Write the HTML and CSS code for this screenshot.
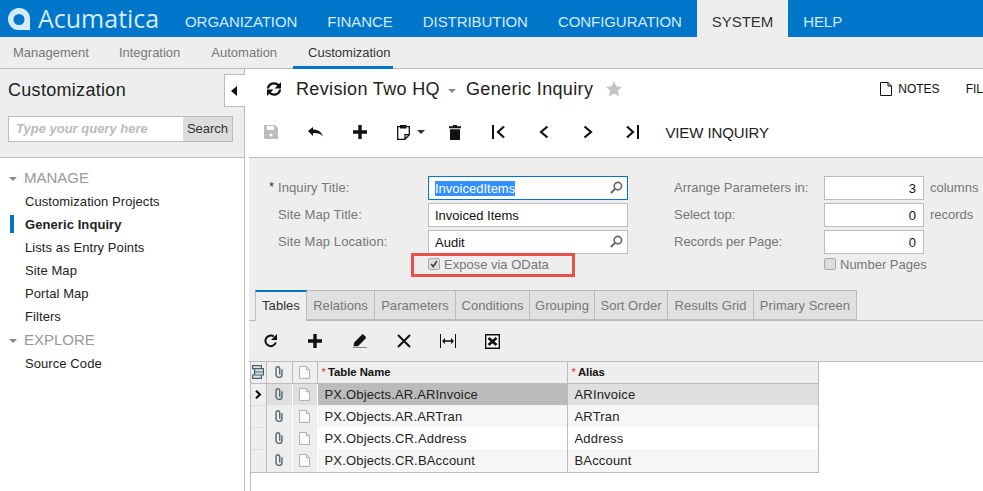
FILE: index.html
```html
<!DOCTYPE html>
<html lang="en">
<head>
  <meta charset="UTF-8" />
  <title>Generic Inquiry</title>
  <link rel="stylesheet" href="styles.css">
</head>
<body>
  <svg class="defs" width="0" height="0">
    <symbol id="i-reload" viewBox="0 0 16 14">
      <path d="M2 6.500A6 5.600 0 0 1 12.600 3.400M14 7.500A6 5.600 0 0 1 3.400 10.600" fill="none" stroke="currentColor" stroke-width="2.200"/>
      <path d="M15 0v6.500H8.500zM1 14V7.500h6.500z" fill="currentColor"/>
    </symbol>
    <symbol id="i-plus" viewBox="0 0 14 14">
      <path d="M5.300 0h3.400v5.300H14v3.400H8.700V14H5.300V8.700H0V5.300h5.300z" fill="currentColor"/>
    </symbol>
    <symbol id="i-clip" viewBox="0 0 10 15">
      <path d="M8.700 4v6.500a3.700 3.700 0 0 1-7.400 0V3.300a2.300 2.300 0 0 1 4.600 0V11" fill="none" stroke="currentColor" stroke-width="1.800"/>
    </symbol>
    <symbol id="i-note" viewBox="0 0 12 14">
      <path d="M.5.500h7.500l3.500 3.500v9.500H.5z" fill="#fbfbfb" stroke="currentColor"/>
      <path d="M8 .5V4h3.500" fill="none" stroke="currentColor"/>
    </symbol>
    <symbol id="i-search" viewBox="0 0 14 14">
      <circle cx="8.500" cy="5.500" r="4" fill="none" stroke="currentColor" stroke-width="1.800"/>
      <path d="M5.500 8.500L1 13" stroke="currentColor" stroke-width="2.200"/>
    </symbol>
  </svg>

  <header class="topbar">
    <div class="logo">
      <svg class="logo-mark" viewBox="0 0 22 22">
        <path d="M11 0c6 0 11 4.500 11 10.500V22H10C4.500 22 0 17 0 11S5 0 11 0z" fill="#d5eafa"/>
        <circle cx="11" cy="11.500" r="5.500" fill="#0076cb"/>
      </svg>
      <span>Acumatica</span>
    </div>
    <nav class="mainnav">
      <a>ORGANIZATION</a>
      <a>FINANCE</a>
      <a>DISTRIBUTION</a>
      <a>CONFIGURATION</a>
      <a class="active">SYSTEM</a>
      <a>HELP</a>
    </nav>
  </header>

  <nav class="subnav">
    <a class="first">Management</a>
    <a>Integration</a>
    <a class="third">Automation</a>
    <a class="active">Customization</a>
  </nav>

  <div class="page">
    <aside class="sidebar">
      <div class="side-top">
        <h2>Customization</h2>
        <div class="searchbox">
          <span class="placeholder">Type your query here</span>
          <span class="search-btn">Search</span>
        </div>
      </div>
      <ul class="tree">
        <li class="group"><i class="caret"></i>MANAGE</li>
        <li>Customization Projects</li>
        <li class="current">Generic Inquiry</li>
        <li>Lists as Entry Points</li>
        <li>Site Map</li>
        <li>Portal Map</li>
        <li>Filters</li>
        <li class="group"><i class="caret"></i>EXPLORE</li>
        <li>Source Code</li>
      </ul>
      <div class="collapse"><i></i></div>
    </aside>

    <main class="content">
      <div class="titlebar">
        <svg class="ico reload-main"><use href="#i-reload"/></svg>
        <span class="crumb">Revision Two HQ</span>
        <i class="caret crumb-caret"></i>
        <span class="crumb">Generic Inquiry</span>
        <svg class="star" viewBox="0 0 16 16"><path d="M8 0l2.400 5.300 5.600.6-4.200 3.800 1.200 5.800L8 12.600l-5 2.900 1.200-5.800L0 5.900l5.600-.6z" fill="#c4c4c4"/></svg>
        <div class="title-links">
          <svg class="ico note-ico"><use href="#i-note"/></svg>
          <span class="notes">NOTES</span>
          <span class="files">FILES</span>
        </div>
      </div>

      <div class="toolbar">
        <span class="tool">
          <svg class="ico-14" viewBox="0 0 14 14"><path d="M0 0h11l3 3v11H0z" fill="#bdbdbd"/><path d="M3 1h7v4H3z" fill="#fff"/><circle cx="7" cy="10" r="1.600" fill="#fff"/></svg>
        </span>
        <span class="tool">
          <svg class="ico-undo" viewBox="0 0 15 10"><path d="M0 4l5-4v2.600c5 0 8.500 1.900 10 7.400-2.200-3.200-5-4-10-3.900V9z" fill="currentColor"/></svg>
        </span>
        <span class="tool"><svg class="ico-14"><use href="#i-plus"/></svg></span>
        <span class="tool tool-wide">
          <svg class="ico-paste" viewBox="0 0 13 16"><path d="M3.300 2.700H.7v12.600H8l4.300-4.600V2.700H9.500M8 15.300v-4.600h4.300" fill="none" stroke="currentColor" stroke-width="1.300"/><path d="M3 1h6.500v3.500H3z" fill="currentColor"/></svg>
          <i class="caret dark"></i>
        </span>
        <span class="tool">
          <svg class="ico-trash" viewBox="0 0 12 15"><path d="M4 0h4v1.200h4v2H0v-2h4zM1 4.200h10V15H1z" fill="currentColor"/></svg>
        </span>
        <span class="tool"><svg class="ico-14" viewBox="0 0 14 14"><path d="M1 0v14" stroke="currentColor" stroke-width="2"/><path d="M12 1.500L6 7l6 5.500" fill="none" stroke="currentColor" stroke-width="2.200"/></svg></span>
        <span class="tool"><svg class="ico-14" viewBox="0 0 14 14"><path d="M10.500 1.500L4 7l6.500 5.500" fill="none" stroke="currentColor" stroke-width="2.200"/></svg></span>
        <span class="tool"><svg class="ico-14" viewBox="0 0 14 14"><path d="M3.500 1.500L10 7l-6.500 5.500" fill="none" stroke="currentColor" stroke-width="2.200"/></svg></span>
        <span class="tool"><svg class="ico-14" viewBox="0 0 14 14"><path d="M13 0v14" stroke="currentColor" stroke-width="2"/><path d="M2 1.500L8 7l-6 5.500" fill="none" stroke="currentColor" stroke-width="2.200"/></svg></span>
        <span class="view-inquiry">VIEW INQUIRY</span>
      </div>

      <section class="formpanel">
        <div class="form-col left-col">
          <div class="row">
            <label class="req">Inquiry Title:</label>
            <div class="field focus"><span class="selected">InvoicedItems</span><svg class="lookup"><use href="#i-search"/></svg></div>
          </div>
          <div class="row">
            <label>Site Map Title:</label>
            <div class="field"><span>Invoiced Items</span></div>
          </div>
          <div class="row">
            <label>Site Map Location:</label>
            <div class="field"><span>Audit</span><svg class="lookup"><use href="#i-search"/></svg></div>
          </div>
          <div class="check-row">
            <span class="check on"><svg viewBox="0 0 12 12"><path d="M2.500 6l2.500 3 4.500-6.500" fill="none" stroke="#444" stroke-width="2"/></svg></span>
            <span>Expose via OData</span>
            <div class="callout"></div>
          </div>
        </div>
        <div class="form-col right-col">
          <div class="row">
            <label>Arrange Parameters in:</label>
            <div class="field num">3</div>
            <span class="suffix">columns</span>
          </div>
          <div class="row">
            <label>Select top:</label>
            <div class="field num">0</div>
            <span class="suffix">records</span>
          </div>
          <div class="row">
            <label>Records per Page:</label>
            <div class="field num">0</div>
          </div>
          <div class="check-row">
            <span class="check"></span>
            <span>Number Pages</span>
          </div>
        </div>
      </section>

      <div class="tabs">
        <a class="active">Tables</a>
        <a class="t-relations">Relations</a>
        <a class="t-parameters">Parameters</a>
        <a class="t-conditions">Conditions</a>
        <a class="t-grouping">Grouping</a>
        <a class="t-sort">Sort Order</a>
        <a class="t-results">Results Grid</a>
        <a class="t-primary">Primary Screen</a>
      </div>

      <div class="gridbar">
        <span class="tool"><svg class="ico-14" viewBox="0 0 14 14"><path d="M11.800 8.500A5.300 5.300 0 1 1 9.800 2.500" fill="none" stroke="currentColor" stroke-width="2"/><path d="M13 0v6H7z" fill="currentColor"/></svg></span>
        <span class="tool"><svg class="ico-14"><use href="#i-plus"/></svg></span>
        <span class="tool"><svg class="ico-14" viewBox="0 0 14 14"><path d="M.5 12.300l.7-3.800L8.800.8c.6-.6 1.200-.6 1.800 0l2 2c.6.600.600 1.200 0 1.800L5 12.300z" fill="currentColor"/><path d="M0 13.500h14" stroke="#888"/></svg></span>
        <span class="tool"><svg class="ico-14" viewBox="0 0 14 14"><path d="M1 1l12 12M13 1L1 13" stroke="currentColor" stroke-width="2"/></svg></span>
        <span class="tool"><svg class="ico-fit" viewBox="0 0 16 14"><path d="M.5 0v14M15.500 0v14" stroke="currentColor"/><path d="M3 7h10" stroke="currentColor" stroke-width="1.500"/><path d="M2 7l3-3v6zM14 7l-3-3v6z" fill="currentColor"/></svg></span>
        <span class="tool"><svg class="ico-xl" viewBox="0 0 15 15"><path d="M.7.7h13.600v13.600H.7z" fill="#fff" stroke="currentColor" stroke-width="1.400"/><path d="M3.500 4l8 7M11.500 4l-8 7" stroke="currentColor" stroke-width="2.800"/></svg></span>
      </div>

      <div class="gridwrap">
        <table class="grid">
          <colgroup>
            <col class="c-sel"><col class="c-ico"><col class="c-ico2"><col class="c-name"><col class="c-alias">
          </colgroup>
          <thead>
            <tr>
              <th class="cell-ico">
                <svg class="ico-head" viewBox="0 0 12 14"><path d="M.6.600h8.800v3H.6zM2.600 3.600h8.800v3.400H2.600zM2.600 7h8.800v3H2.600zM.6 10h8.800v3.400H.6z" fill="#dfe5e8" stroke="#46606f" stroke-width="1.200"/></svg>
              </th>
              <th class="cell-ico"><svg class="ico-cl"><use href="#i-clip"/></svg></th>
              <th class="cell-ico"><svg class="ico-nt"><use href="#i-note"/></svg></th>
              <th><em>*</em>Table Name</th>
              <th><em>*</em>Alias</th>
            </tr>
          </thead>
          <tbody>
            <tr class="sel">
              <td class="cell-ico marker"><svg class="arrow" viewBox="0 0 7 9"><path d="M1 .8L5 4.500 1 8.200" fill="none" stroke="#000" stroke-width="2"/></svg></td>
              <td class="cell-ico"><svg class="ico-cl"><use href="#i-clip"/></svg></td>
              <td class="cell-ico"><svg class="ico-nt"><use href="#i-note"/></svg></td>
              <td class="focus-cell">PX.Objects.AR.ARInvoice</td>
              <td>ARInvoice</td>
            </tr>
            <tr class="alt">
              <td class="cell-ico marker"></td>
              <td class="cell-ico"><svg class="ico-cl"><use href="#i-clip"/></svg></td>
              <td class="cell-ico"><svg class="ico-nt"><use href="#i-note"/></svg></td>
              <td>PX.Objects.AR.ARTran</td>
              <td>ARTran</td>
            </tr>
            <tr>
              <td class="cell-ico marker"></td>
              <td class="cell-ico"><svg class="ico-cl"><use href="#i-clip"/></svg></td>
              <td class="cell-ico"><svg class="ico-nt"><use href="#i-note"/></svg></td>
              <td>PX.Objects.CR.Address</td>
              <td>Address</td>
            </tr>
            <tr class="alt">
              <td class="cell-ico marker"></td>
              <td class="cell-ico"><svg class="ico-cl"><use href="#i-clip"/></svg></td>
              <td class="cell-ico"><svg class="ico-nt"><use href="#i-note"/></svg></td>
              <td>PX.Objects.CR.BAccount</td>
              <td>BAccount</td>
            </tr>
          </tbody>
        </table>
      </div>
    </main>
  </div>
</body>
</html>
```

FILE: styles.css
```css
* {
  box-sizing: border-box;
}

html, body {
  height: 491px;
}

body {
  margin: 0;
  overflow: hidden;
  background: #fff;
  color: #222;
  font-family: "Liberation Sans", Arial, sans-serif;
  font-size: 13px;
}

.defs {
  position: absolute;
}

/* top bar */
.topbar {
  display: flex;
  height: 37px;
  background: #0076cb;
}

.logo {
  display: flex;
  align-items: center;
  width: 170px;
  padding-left: 8px;
  color: #d5eafa;
  font-family: "Open Sans", sans-serif;
  font-size: 25px;
  line-height: 37px;
}

.logo-mark {
  width: 22px;
  height: 22px;
  margin-right: 8px;
}

.mainnav {
  display: flex;
}

.mainnav a {
  padding: 0 15px;
  color: #d5eafa;
  font-size: 15px;
  letter-spacing: -0.06px;
  line-height: 44px;
}

.mainnav a.active {
  height: 37px;
  background: #eee;
  color: #333;
}

.subnav {
  display: flex;
  height: 32px;
  background: #eee;
  border-bottom: 1px solid #bbb;
}

.subnav a {
  padding: 0 15px 0 16px;
  color: #777;
  font-size: 13px;
  line-height: 32px;
}

.subnav a.first {
  padding: 0 14px 0 13px;
}

.subnav a.third {
  padding-right: 16px;
}

.subnav a.active {
  width: 100px;
  height: 32px;
  padding: 0 15px;
  color: #333;
  border-bottom: 3px solid #0076cb;
}

/* sidebar */
.page {
  display: flex;
  height: 422px;
}

.sidebar {
  position: relative;
  flex: 0 0 245px;
  border-right: 1px solid #bbb;
}

.side-top {
  height: 89px;
  padding: 10px 11px 0 8px;
  background: #eee;
  border-bottom: 1px solid #bbb;
}

.side-top h2 {
  margin: 0 0 15px;
  color: #222;
  font-size: 18px;
  font-weight: normal;
  letter-spacing: 0.3px;
  line-height: 22px;
}

.searchbox {
  display: flex;
  justify-content: space-between;
  height: 26px;
  background: #fff;
  border: 1px solid #bbb;
  line-height: 24px;
}

.placeholder {
  padding-left: 7px;
  color: #bbb;
  font-style: italic;
  font-weight: bold;
}

.search-btn {
  width: 49px;
  background: #ddd;
  color: #333;
  text-align: center;
}

.tree {
  margin: 0;
  padding: 8px 0 0;
  list-style: none;
  letter-spacing: 0.08px;
}

.tree li {
  height: 23px;
  padding-left: 25px;
  line-height: 23px;
}

.tree li.group {
  display: flex;
  align-items: center;
  height: 24px;
  padding-left: 9px;
  padding-bottom: 2px;
  color: #999;
  font-size: 15px;
  letter-spacing: 0;
}

.tree li.group .caret {
  margin: 4px 7px 0 0;
}

.tree li.current {
  position: relative;
  font-weight: bold;
}

.tree li.current::before {
  content: "";
  position: absolute;
  left: 10px;
  top: 2px;
  width: 4px;
  height: 18px;
  background: #0076cb;
}

.caret {
  display: inline-block;
  width: 0;
  height: 0;
  border-left: 4px solid transparent;
  border-right: 4px solid transparent;
  border-top: 4px solid #888;
}

.caret.dark {
  margin-left: 7px;
  border-top-color: #333;
}

.collapse {
  position: absolute;
  left: 224px;
  top: 5px;
  width: 21px;
  height: 33px;
  background: #fff;
  border: 1px solid #bbb;
  border-right: none;
}

.collapse i {
  position: absolute;
  left: 6px;
  top: 11px;
  border-top: 5px solid transparent;
  border-bottom: 5px solid transparent;
  border-right: 6px solid #111;
}

/* main */
.content {
  flex: 1;
  min-width: 0;
  padding-left: 4px;
}

.titlebar {
  display: flex;
  align-items: center;
  height: 43px;
  padding: 0 0 3px 17px;
  color: #111;
}

.reload-main {
  flex: none;
  width: 16px;
  height: 14px;
  margin-right: 14px;
}

.crumb {
  flex: none;
  color: #222;
  font-size: 18px;
  letter-spacing: 0.35px;
  white-space: nowrap;
}

.crumb-caret {
  flex: none;
  margin: 3px 10px 0 8px;
}

.star {
  flex: none;
  width: 16px;
  height: 16px;
  margin-left: 13px;
}

.title-links {
  display: flex;
  align-items: center;
  flex: none;
  margin-left: 258px;
  font-size: 12px;
  white-space: nowrap;
}

.note-ico {
  width: 12px;
  height: 14px;
  margin-right: 6px;
}

.notes {
  margin-right: 26px;
}

.toolbar {
  display: flex;
  align-items: center;
  height: 45px;
  padding-bottom: 5px;
  color: #111;
}

.tool {
  display: flex;
  align-items: center;
  justify-content: center;
  flex: 0 0 44.300px;
}

.tool-wide {
  flex-basis: 51px;
  justify-content: flex-start;
  padding-left: 15px;
}

.ico-14 {
  width: 14px;
  height: 14px;
}

.ico-undo {
  width: 15px;
  height: 10px;
}

.ico-paste {
  width: 13px;
  height: 16px;
}

.ico-trash {
  width: 12px;
  height: 15px;
}

.view-inquiry {
  margin-left: 11px;
  font-size: 15px;
  letter-spacing: -0.1px;
  color: #222;
}

/* form */
.formpanel {
  display: flex;
  height: 133px;
  padding-top: 18px;
  background: #eee;
  border-top: 1px solid #bbb;
  color: #777;
}

.form-col {
  flex: none;
}

.left-col {
  width: 425px;
}

.row {
  display: flex;
  align-items: center;
  height: 24px;
  margin-bottom: 3px;
}

.row label {
  flex: none;
  padding-bottom: 2px;
  letter-spacing: 0.1px;
}

.left-col .row label {
  width: 179px;
  padding-left: 29px;
}

.right-col .row label {
  width: 150px;
  letter-spacing: 0;
}

.req {
  position: relative;
}

.req::before {
  content: "*";
  position: absolute;
  left: 20px;
  top: -1px;
  color: #333;
}

.field {
  position: relative;
  flex: none;
  width: 200px;
  height: 24px;
  padding-left: 6px;
  background: #fff;
  border: 1px solid #bbb;
  color: #111;
  font-size: 13px;
  line-height: 24px;
}

.field.focus {
  border-color: #0076cb;
}

.selected {
  background: #3390ff;
  color: #fff;
}

.field.num {
  width: 100px;
  padding: 0 7px 0 0;
  text-align: right;
}

.lookup {
  position: absolute;
  right: 4px;
  top: 4px;
  width: 13px;
  height: 13px;
  color: #666;
}

.suffix {
  margin-left: 6px;
  padding-bottom: 2px;
}

.check-row {
  position: relative;
  display: flex;
  align-items: center;
  gap: 4px;
  height: 14px;
  margin-top: 1px;
}

.left-col .check-row {
  margin-left: 179px;
}

.right-col .check-row {
  margin-left: 150px;
}

.check {
  width: 12px;
  height: 12px;
  background: #ddd;
  border: 1px solid #aaa;
  border-radius: 2px;
}

.check svg {
  display: block;
  width: 10px;
  height: 10px;
}

/* the highlight drawn on top of the screenshot */
.callout {
  position: absolute;
  left: -17px;
  top: -4px;
  width: 164px;
  height: 24px;
  border: 3px solid #e8504a;
}

/* tabs */
.tabs {
  display: flex;
  height: 31px;
  padding-left: 6px;
  background: #eee;
  border-bottom: 1px solid #bbb;
}

.tabs a {
  height: 30px;
  background: #e0e0e0;
  border: 1px solid #bbb;
  border-left: none;
  color: #777;
  letter-spacing: 0.05px;
  line-height: 29px;
  text-align: center;
}

.tabs a.active {
  width: 52px;
  height: 31px;
  background: #eee;
  border-left: 1px solid #bbb;
  border-top: 2px solid #0076cb;
  border-bottom: none;
  color: #333;
  line-height: 28px;
}

.t-relations { width: 68px; }
.t-parameters { width: 81px; }
.t-conditions { width: 74px; }
.t-grouping { width: 65px; }
.t-sort { width: 73px; }
.t-results { width: 86px; }
.t-primary { width: 103px; }

.gridbar {
  display: flex;
  align-items: center;
  height: 41px;
  background: #eee;
  border-bottom: 1px solid #bbb;
  color: #111;
}

.ico-fit {
  width: 16px;
  height: 14px;
}

.ico-xl {
  width: 15px;
  height: 15px;
}

/* grid */
.gridwrap {
  height: 130px;
  margin-left: 1px;
  border-left: 1px solid #bbb;
}

.grid {
  width: 567px;
  border-collapse: collapse;
  table-layout: fixed;
}

.c-sel { width: 15px; }
.c-ico { width: 26px; }
.c-ico2 { width: 25px; }
.c-name { width: 250px; }
.c-alias { width: 251px; }

.grid th, .grid td {
  height: 22px;
  padding: 0 0 0 7px;
  border-right: 1px solid #bbb;
  text-align: left;
  white-space: nowrap;
}

.grid th {
  height: 21px;
  background: #eee;
  border-bottom: 1px solid #bbb;
  color: #111;
  font-size: 11.300px;
}

.grid th em {
  margin-right: 2px;
  color: #e33;
  font-style: normal;
  font-weight: normal;
}

.grid th:nth-child(n+4) {
  padding-left: 4px;
}

.grid td {
  color: #222;
  font-size: 13px;
  letter-spacing: 0.17px;
}

.grid .cell-ico {
  padding: 0;
  text-align: center;
  line-height: 0;
}

.grid td.cell-ico {
  background: #eee;
  border-right-color: #fff;
  color: #666;
}

.grid tbody tr:last-child td {
  height: 23px;
  padding-top: 1px;
  border-bottom: 1px solid #bbb;
}

.grid tbody tr:last-child td.cell-ico {
  padding-top: 0;
}

.grid td.marker {
  border-bottom: 1px solid #ddd;
  border-right-color: #bbb;
}

.grid tr.alt td {
  background: #f6f6f6;
}

.grid tr.alt td.cell-ico {
  background: #eee;
}

.grid tr.sel td {
  background: #dfdfdf;
}

.grid tr.sel td.marker {
  background: #eee;
}

.grid tr.sel td.focus-cell {
  background: #bbb;
}

.ico-head {
  width: 12px;
  height: 14px;
}

.ico-cl {
  width: 8px;
  height: 12px;
  color: #5a6a72;
}

.ico-nt {
  width: 11px;
  height: 13px;
  color: #aaa;
}

.arrow {
  width: 7px;
  height: 9px;
}
```
